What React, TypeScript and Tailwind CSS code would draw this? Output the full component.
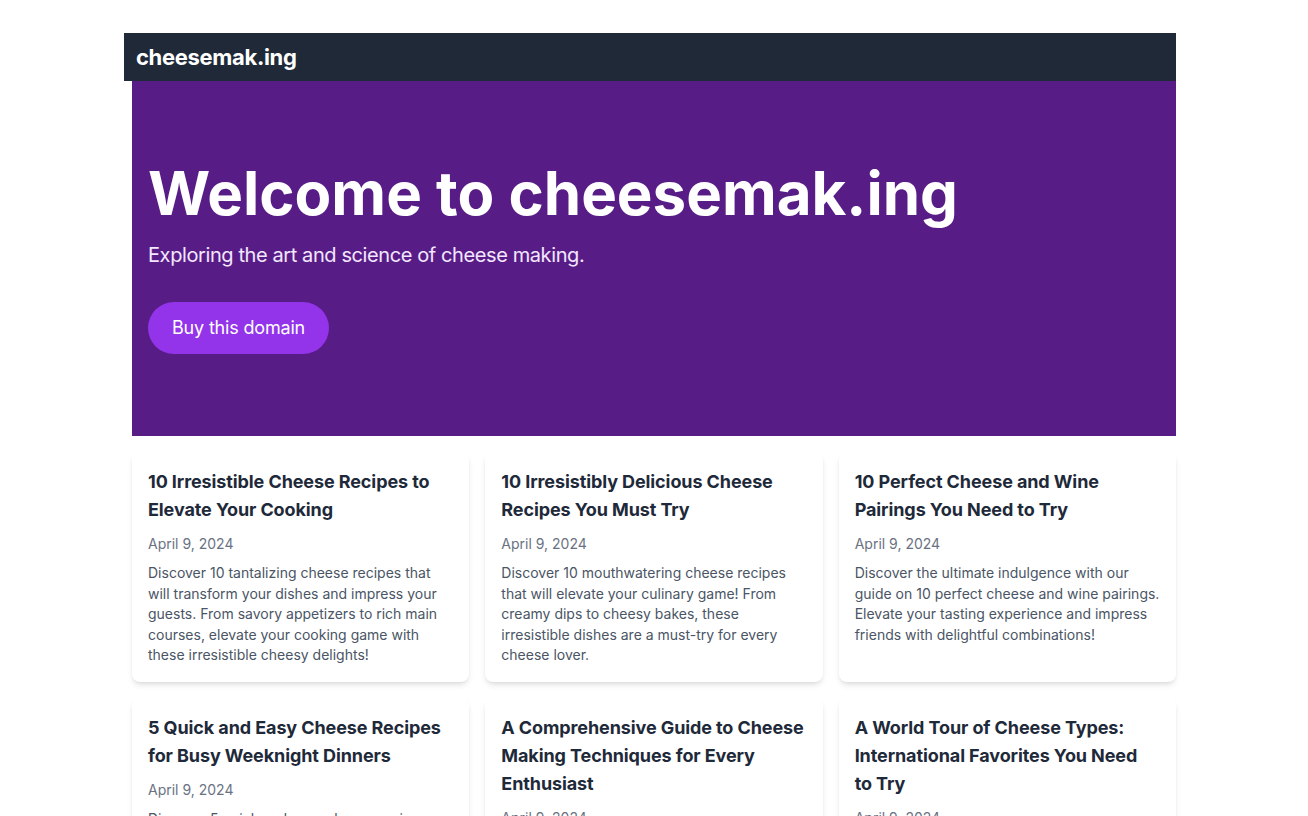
const posts = [
  {
    title: '10 Irresistible Cheese Recipes to Elevate Your Cooking',
    date: 'April 9, 2024',
    excerpt:
      'Discover 10 tantalizing cheese recipes that will transform your dishes and impress your guests. From savory appetizers to rich main courses, elevate your cooking game with these irresistible cheesy delights!',
  },
  {
    title: '10 Irresistibly Delicious Cheese Recipes You Must Try',
    date: 'April 9, 2024',
    excerpt:
      'Discover 10 mouthwatering cheese recipes that will elevate your culinary game! From creamy dips to cheesy bakes, these irresistible dishes are a must-try for every cheese lover.',
  },
  {
    title: '10 Perfect Cheese and Wine Pairings You Need to Try',
    date: 'April 9, 2024',
    excerpt:
      'Discover the ultimate indulgence with our guide on 10 perfect cheese and wine pairings. Elevate your tasting experience and impress friends with delightful combinations!',
  },
  {
    title: '5 Quick and Easy Cheese Recipes for Busy Weeknight Dinners',
    date: 'April 9, 2024',
    excerpt:
      'Discover 5 quick and easy cheese recipes that make busy weeknight dinners a breeze, with simple ingredients and big cheesy flavor.',
  },
  {
    title: 'A Comprehensive Guide to Cheese Making Techniques for Every Enthusiast',
    date: 'April 9, 2024',
    excerpt:
      'From fresh curds to aged wheels, learn the essential techniques every home cheesemaker needs to craft delicious cheese.',
  },
  {
    // "to Try" を一緒に折り返す
    title: 'A World Tour of Cheese Types: International Favorites You Need to\u00a0Try',
    date: 'April 9, 2024',
    excerpt:
      'Travel the globe through its finest cheeses and discover international favorites that deserve a place on your board.',
  },
]

export default function App() {
  return (
    <div className="min-h-screen bg-white font-['Inter',sans-serif]">
      <div className="ml-[124px] w-[1052px] pt-[33px]">
        {/* ヘッダー */}
        <header className="bg-[#1f2937] h-12 px-3 flex items-center">
          <span className="text-white text-[22px] font-bold tracking-[-0.015em]">cheesemak.ing</span>
        </header>

        <main className="pl-2">
          {/* ヒーロー */}
          <section className="bg-[#581c87] px-4 pt-[82px] pb-[82px]">
            <h1 className="text-white text-6xl font-bold leading-none">Welcome to cheesemak.ing</h1>
            <p className="mt-[18px] text-xl leading-7 tracking-[-0.02em] text-purple-100">
              Exploring the art and science of cheese making.
            </p>
            <button className="mt-[33px] bg-[#9333ea] text-white text-lg leading-7 tracking-[-0.01em] px-6 py-3 rounded-full">
              Buy this domain
            </button>
          </section>

          {/* 記事一覧 */}
          <div className="grid grid-cols-3 gap-4 mt-4">
            {posts.map((post) => (
              <article key={post.title} className="bg-white rounded-lg shadow-md p-4">
                <h2 className="text-lg font-bold text-gray-800 leading-7 tracking-[-0.1px]">{post.title}</h2>
                <p className="mt-[10px] text-sm leading-5 text-gray-500">{post.date}</p>
                <p className="mt-[9px] text-sm leading-[20.5px] text-gray-600">{post.excerpt}</p>
              </article>
            ))}
          </div>
        </main>
      </div>
    </div>
  )
}
